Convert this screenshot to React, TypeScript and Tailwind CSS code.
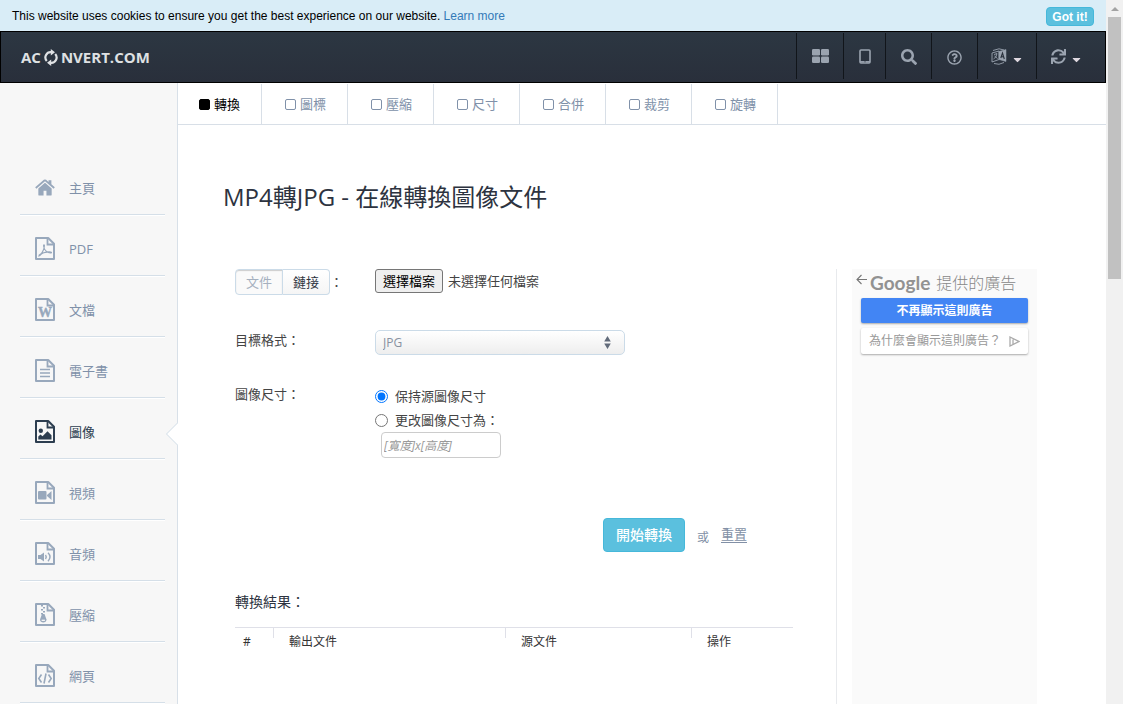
import { useState } from 'react'
import type { ReactNode } from 'react'
import clsx from 'clsx'
import { FaCaretDown, FaRegQuestionCircle, FaSearch, FaSync } from 'react-icons/fa'

const FileIcon = ({ children }: { children?: ReactNode }) => (
  <svg width="20" height="23" viewBox="0 0 20 23" fill="none" stroke="currentColor" strokeWidth="1.6">
    <path d="M1 1h12.2L19 6.800V22H1z" strokeWidth="2" strokeLinejoin="round" />
    <path d="M12.500 1v6.500H19" strokeWidth="1.800" />
    {children}
  </svg>
)

const menu = [
  {
    name: '主頁',
    icon: (
      <svg width="21" height="17" viewBox="0 0 21 17" fill="currentColor">
        <path d="M10.500 3.500L3.500 9.500V16q0 1 1 1H9v-5h3v5h4.500q1 0 1-1V9.500z" />
        <path d="M10.500 0q.7 0 1.200.400L14.200 2.600V1h3v4.200l3.600 3.100-1.200 1.400-9.100-7.700-9.100 7.700L.2 8.300 9.300.4q.5-.4 1.200-.4z" />
      </svg>
    ),
  },
  {
    name: 'PDF',
    icon: (
      <FileIcon>
        <path d="M4 19c1.800-.400 5.400-6.500 5.400-10.200 0-1.400-.900-1.300-.800.200.300 4 4 7.300 7.400 7 1-.400.300-1.300-2-1.200-3.500.100-7.300 1.300-9.700 3.100z" strokeWidth="1.200" />
      </FileIcon>
    ),
  },
  {
    name: '文檔',
    icon: (
      <FileIcon>
        <text x="10" y="19" textAnchor="middle" fontFamily="Liberation Serif, serif" fontWeight="bold" fontSize="14" fill="currentColor" strokeWidth=".4">W</text>
      </FileIcon>
    ),
  },
  {
    name: '電子書',
    icon: (
      <FileIcon>
        <path d="M5 10.500h10M5 14h10M5 17.500h10" />
      </FileIcon>
    ),
  },
  {
    name: '圖像',
    icon: (
      <FileIcon>
        <circle cx="5.800" cy="10.800" r="2.200" fill="currentColor" stroke="none" />
        <path d="M3.300 19.500v-3l2.200-2 2 1.800 5-5 4 4v4.200z" fill="currentColor" stroke="none" />
      </FileIcon>
    ),
  },
  {
    name: '視頻',
    icon: (
      <FileIcon>
        <rect x="3" y="10" width="8.500" height="8.500" rx="1" fill="currentColor" stroke="none" />
        <path d="M12 14l4.500-4v9L12 15z" fill="currentColor" stroke="none" />
      </FileIcon>
    ),
  },
  {
    name: '音頻',
    icon: (
      <FileIcon>
        <path d="M3 13h2.500L9 10.500v9l-3.500-2.500H3z" fill="currentColor" stroke="none" />
        <path d="M10.500 13q1.500 2 0 4M13 10.800q4 4.200 0 8.400" strokeWidth="1.400" />
      </FileIcon>
    ),
  },
  {
    name: '壓縮',
    icon: (
      <FileIcon>
        <path d="M6 2.700h2M8 4.700h2M6 6.700h2M8 8.700h2M6 10.700h2" strokeWidth="1.400" />
        <path d="M7 11h2.500l2 5.500c0 4-6.500 4-6.500 0z" fill="currentColor" stroke="none" />
        <path d="M6.600 17.300h3.300" stroke="#f7f7f7" strokeWidth="1.300" />
      </FileIcon>
    ),
  },
  {
    name: '網頁',
    icon: (
      <FileIcon>
        <path d="M6.500 10.500l-2.700 4 2.700 4M13.500 10.500l2.700 4-2.700 4M11 9.500l-2 10" />
      </FileIcon>
    ),
  },
]

const tabs = ['轉換', '圖標', '壓縮', '尺寸', '合併', '裁剪', '旋轉']

const LogoIcon = () => (
  <svg width="14" height="17" viewBox="0 0 14 17" fill="none" stroke="currentColor" strokeWidth="2.200">
    <path d="M2.800 12A5.300 5.300 0 0 1 7.500 3.200M11.200 5A5.300 5.300 0 0 1 6.500 13.800" />
    <path d="M6.800 0l4.200 3.300-4.200 3.300zM7.200 17L3 13.700l4.200-3.300z" fill="currentColor" stroke="none" />
  </svg>
)

const AppsIcon = () => (
  <svg width="17" height="14" viewBox="0 0 17 14" fill="currentColor">
    <rect width="8" height="6.500" rx="1.300" />
    <rect x="9" width="8" height="6.500" rx="1.300" />
    <rect y="7.500" width="8" height="6.500" rx="1.300" />
    <rect x="9" y="7.500" width="8" height="6.500" rx="1.300" />
  </svg>
)

const TabletIcon = () => (
  <svg width="12" height="15" viewBox="0 0 12 15" fill="none" stroke="currentColor">
    <rect x="1" y="1" width="10" height="13" rx="1" strokeWidth="1.600" />
    <path d="M1 12.800h10" strokeWidth="1.500" />
    <path d="M5.500 12.800h1" stroke="#2a323d" />
  </svg>
)

const LanguageIcon = () => (
  <svg width="16" height="17" viewBox="0 0 16 17" fill="none" stroke="currentColor">
    <path d="M8 3.500L15 1.500v12l-7-2z" fill="currentColor" strokeWidth=".5" />
    <path d="M1 5l7-2v8.500l-7 2.500zM2 2.500L8 .8l5 1.200M3 15.500q5 2 10-1" strokeWidth=".9" />
    <path d="M3 6.500l3-1q-.500 4-3.500 5.500M3.500 8l3 2.500" strokeWidth=".9" />
    <path d="M9.800 10l1.700-5 1.800 6M10.500 8.500l2 .5" stroke="#2a323d" strokeWidth="1.100" />
  </svg>
)

const Sidebar = () => (
  <aside className="w-[178px] shrink-0 border-r border-[#d8e0e8] bg-[#f7f7f7] pt-[71px] pr-3 pl-5">
    <nav>
      {menu.map((item) => (
        <a
          key={item.name}
          href="#"
          className={clsx(
            'relative flex h-[61px] items-center gap-3.5 border-b border-[#d5dfe8] pt-[7px] pl-[15px] shadow-[0_1px_0_#fff]',
            item.name === '圖像' ? 'text-[#2d3e50]' : 'text-[#8091a9]'
          )}
        >
          <span className={clsx('flex w-5 shrink-0 justify-center', item.name !== '圖像' && 'text-[#98a8bc]')}>{item.icon}</span>
          {item.name}
          {item.name === '圖像' && (
            <svg className="absolute top-6 -right-[13px]" width="13" height="24" viewBox="0 0 13 24">
              <path d="M13 .5L1.500 12 13 23.500z" fill="#fff" />
              <path d="M13 .5L1.500 12 13 23.500" fill="none" stroke="#d0dce6" />
            </svg>
          )}
        </a>
      ))}
    </nav>
  </aside>
)

const Header = () => (
  <header className="flex h-[52px] shrink-0 items-start justify-between border border-black bg-linear-to-b from-[#2c3742] to-[#292f3b] pl-5">
    <a href="#" className="flex h-[50px] items-center gap-[3px] text-[15px] font-bold text-[#dfe1e3]">
      AC
      <LogoIcon />
      NVERT.COM
    </a>
    <div className="mt-px flex h-[46px] text-[#9ba4b0]">
      <button aria-label="Apps" className="flex w-[47px] items-center justify-center border-l border-[#11151a]">
        <AppsIcon />
      </button>
      <button aria-label="Mobile" className="flex w-[42px] items-center justify-center border-l border-[#11151a]">
        <TabletIcon />
      </button>
      <button aria-label="Search" className="flex w-[46px] items-center justify-center border-l border-[#11151a] pt-0.5">
        <FaSearch size={16} />
      </button>
      <button aria-label="Help" className="flex w-[46px] items-center justify-center border-l border-[#11151a] pt-0.5">
        <FaRegQuestionCircle size={15} />
      </button>
      <button aria-label="Language" className="flex w-[59px] items-center justify-center gap-1 border-l border-[#11151a]">
        <LanguageIcon />
        <FaCaretDown size={13} className="mt-1.5 text-[#dfd8e0]" />
      </button>
      <button aria-label="Convert" className="flex w-[69px] items-center gap-1 border-l border-[#11151a] pl-3.5">
        <FaSync size={15} />
        <FaCaretDown size={13} className="mt-1.5 text-[#dfd8e0]" />
      </button>
    </div>
  </header>
)

const ConvertForm = () => {
  const [resize, setResize] = useState(false)
  return (
    <form className="text-[#444]" onSubmit={(e) => e.preventDefault()}>
      <div className="flex h-[26px]">
        <div className="flex w-[140px] shrink-0 items-center">
          <button type="button" className="h-[26px] w-12 rounded-l border border-[#cbdbe8] bg-[#fafafa] text-[#a5b0bf] shadow-[inset_0_1px_1px_#ccc]">
            文件
          </button>
          <button type="button" className="h-[26px] w-[47px] rounded-r border border-l-0 border-[#cbdbe8] bg-linear-to-b from-white to-[#f5f5f5] text-[#2d3340]">
            鏈接
          </button>
          <span>：</span>
        </div>
        <label className="flex h-6 cursor-pointer items-center gap-[5px]">
          <input type="file" className="sr-only" />
          <span className="flex h-6 w-[68px] items-center justify-center rounded-[3px] border border-[#767676] bg-[#efefef] text-black">
            選擇檔案
          </span>
          未選擇任何檔案
        </label>
      </div>

      <div className="mt-[35px] flex">
        <label htmlFor="format" className="w-[140px] leading-5">目標格式：</label>
        <div className="relative w-[250px]">
          <select id="format" className="h-[25px] w-full appearance-none rounded-[5px] border border-[#cbdbe8] bg-linear-to-b from-white to-[#eee] px-[7px] text-xs text-[#8791a0]">
            <option>JPG</option>
            <option>PNG</option>
            <option>GIF</option>
          </select>
          <svg className="pointer-events-none absolute top-1.5 right-3.5" width="7" height="13" viewBox="0 0 7 13" fill="#626b7a">
            <path d="M3.500 0L6.800 5.500H.2zM.2 7.500h6.600L3.500 13z" />
          </svg>
        </div>
      </div>

      <div className="mt-[29px] flex">
        <span className="w-[140px] leading-5">圖像尺寸：</span>
        <div>
          <label className="flex h-6 items-center gap-[7px]">
            <input type="radio" name="size" className="size-[13px]" checked={!resize} onChange={() => setResize(false)} />
            保持源圖像尺寸
          </label>
          <label className="flex h-6 items-center gap-[7px]">
            <input type="radio" name="size" className="size-[13px]" checked={resize} onChange={() => setResize(true)} />
            更改圖像尺寸為：
          </label>
          <input
            type="text"
            aria-label="更改圖像尺寸為"
            placeholder="[寬度]x[高度]"
            className="ml-1.5 block h-[26px] w-[120px] rounded border border-[#ccc] px-0.5 text-xs italic placeholder:text-[#999]"
          />
        </div>
      </div>

      <div className="mt-15 flex items-center justify-end pr-[46px]">
        <button type="submit" className="h-[34px] w-[82px] rounded border border-[#46b8da] bg-[#5bc0de] text-sm font-medium text-white">
          開始轉換
        </button>
        <span className="mt-1.5 ml-3 text-xs text-[#8290a6]">或</span>
        <button type="reset" className="ml-3 border-b border-[#8290a6] leading-[15px] text-[#8290a6]">重置</button>
      </div>
    </form>
  )
}

const AdPanel = () => (
  <aside className="mr-[69px] ml-[15px] w-[185px] shrink-0 bg-[#fafafa]">
    <div className="flex h-7 items-center text-base text-[#999]">
      <button aria-label="返回" className="mb-2 ml-1">
        <svg width="12" height="11" viewBox="0 0 12 11" fill="none" stroke="#777" strokeWidth="1.100">
          <path d="M11 5.500H1M5.500 1L1 5.500 5.500 10" />
        </svg>
      </button>
      <span className="ml-0.5 font-['Lato',sans-serif] text-[19px] font-bold text-[#929292]">Google</span>
      <span className="ml-1.5 font-light text-[#888]">提供的廣告</span>
    </div>
    <div className="px-[9px] text-xs">
      <button className="mt-px block h-[25px] w-full rounded-xs bg-[#4285f4] font-bold text-white shadow-[0_1px_2px_#aaa]">
        不再顯示這則廣告
      </button>
      <button className="mt-[5px] flex h-[26px] w-full items-center justify-between rounded-xs bg-white px-2 text-[#999] shadow-[0_1px_2px_#aaa]">
        為什麼會顯示這則廣告？
        <svg width="11" height="11" viewBox="0 0 11 11" fill="none" stroke="#aaa" strokeWidth="1.300">
          <path d="M1 1l9 4.500L1 10zM4 3.500v4.500" />
        </svg>
      </button>
    </div>
  </aside>
)

const App = () => {
  return (
    <div className="flex h-screen overflow-hidden bg-white font-['Open_Sans','Noto_Sans_CJK_TC',sans-serif] text-[13px] leading-5" lang="zh-Hant">
      <div className="flex min-w-0 flex-1 flex-col">
        <div className="flex h-[31px] shrink-0 items-center justify-between bg-[#d9edf7] px-3 font-['Liberation_Sans',sans-serif] text-xs text-black">
          <p>
            This website uses cookies to ensure you get the best experience on our website.{' '}
            <a href="#" className="text-[#337ab7]">Learn more</a>
          </p>
          <button className="mt-0.5 h-[19px] w-12 rounded border border-[#46b8da] bg-[#5bc0de] leading-4 font-bold text-white">
            Got it!
          </button>
        </div>
        <Header />
        <div className="flex min-h-0 flex-1">
          <Sidebar />
          <main className="flex min-w-0 flex-1 flex-col">
            <nav className="mt-px flex h-[41px] shrink-0 border-b border-[#d8dfe7]">
              {tabs.map((tab, i) => (
                <a
                  key={tab}
                  href="#"
                  className={clsx(
                    'flex items-center gap-1 border-r border-[#d8dfe7]',
                    i === 0 ? 'w-[84px] pl-[21px] text-black' : 'w-[86px] pl-[23px] text-[#8091a9]'
                  )}
                >
                  <span className={clsx('size-[11px] rounded-[2px] border border-current', i === 0 && 'bg-current')} />
                  {tab}
                </a>
              ))}
            </nav>
            <h1 className="mt-14 pl-[45px] text-2xl leading-8 font-normal text-[#2d3340]">MP4轉JPG - 在線轉換圖像文件</h1>
            <div className="mt-14 flex flex-1">
              <section className="flex-1 border-r border-[#e8eaed] pr-[43px] pl-[57px]">
                <ConvertForm />
                <h2 className="mt-10 text-sm text-[#2d3340]">轉換結果：</h2>
                <table className="mt-[15px] w-full table-fixed border-t border-[#dfe0e8] text-left text-xs text-[#333]">
                  <thead>
                    <tr>
                      <th className="w-[38px] pt-1.5 pl-2 font-medium">#</th>
                      {['輸出文件', '源文件', '操作'].map((name, i) => (
                        <th key={name} className={clsx('p-0 font-normal', i === 0 && 'w-[232px]', i === 1 && 'w-[186px]')}>
                          <div className="flex items-start">
                            <span className="h-2.5 w-px bg-[#dfe0e8]" />
                            <span className="pt-1.5 pl-[15px]">{name}</span>
                          </div>
                        </th>
                      ))}
                    </tr>
                  </thead>
                </table>
              </section>
              <AdPanel />
            </div>
          </main>
        </div>
      </div>
      <div className="flex w-[17px] shrink-0 flex-col items-center bg-[#f1f1f1]">
        <div className="flex h-[17px] items-center">
          <svg width="8" height="4" viewBox="0 0 8 4" fill="#a3a3a3">
            <path d="M4 0l4 4H0z" />
          </svg>
        </div>
        <div className="h-[262px] w-[13px] bg-[#c1c1c1]" />
      </div>
    </div>
  )
}

export default App
